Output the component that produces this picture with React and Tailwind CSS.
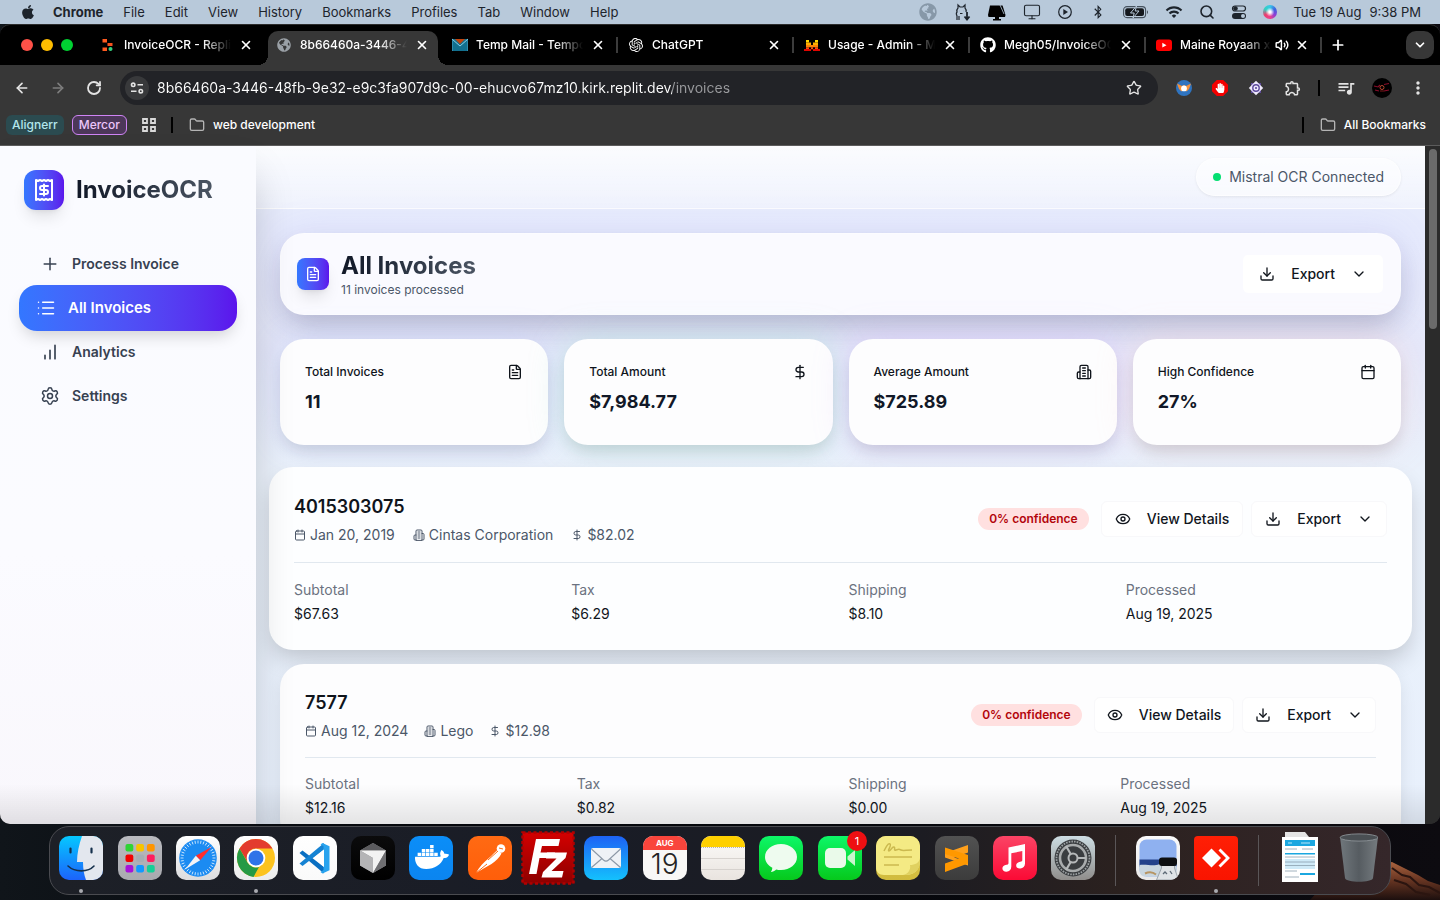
import React from "react";
import {
  Plus,
  List,
  Settings,
  FileText,
  Download,
  ChevronDown,
  DollarSign,
  Calendar,
  Eye,
  X,
  ArrowLeft,
  ArrowRight,
  RotateCw,
  Star,
  Search,
  Monitor,
  Folder,
  Volume2,
} from "lucide-react";
import { FaApple, FaBluetoothB, FaGithub, FaDocker, FaGlobeAmericas, FaHandPaper } from "react-icons/fa";
import { SiOpenai } from "react-icons/si";
import { MdOutlineExtension, MdQueueMusic, MdMoreVert, MdWifi } from "react-icons/md";

/* ---------- shared line icons ---------- */

function Line({ className = "size-4", children, width = 2 }) {
  return (
    <svg
      viewBox="0 0 24 24"
      fill="none"
      stroke="currentColor"
      strokeWidth={width}
      strokeLinecap="round"
      strokeLinejoin="round"
      className={className}
      aria-hidden="true"
    >
      {children}
    </svg>
  );
}

const Building = ({ className }) => (
  <Line className={className}>
    <path d="M6 22V4a2 2 0 0 1 2-2h8a2 2 0 0 1 2 2v18Z" />
    <path d="M6 12H4a2 2 0 0 0-2 2v6a2 2 0 0 0 2 2h2" />
    <path d="M18 9h2a2 2 0 0 1 2 2v9a2 2 0 0 1-2 2h-2" />
    <path d="M10 6h4M10 10h4M10 14h4M10 18h4" />
  </Line>
);

const Bars = ({ className }) => (
  <Line className={className}>
    <path d="M12 20V10M18 20V4M6 20v-4" />
  </Line>
);

const Receipt = ({ className }) => (
  <Line className={className}>
    <path d="M4 2v20l2-1 2 1 2-1 2 1 2-1 2 1 2-1 2 1V2l-2 1-2-1-2 1-2-1-2 1-2-1-2 1Z" />
    <path d="M16 8h-6a2 2 0 1 0 0 4h4a2 2 0 1 1 0 4H8" />
    <path d="M12 17.5v-11" />
  </Line>
);

/* ---------- menu bar ---------- */

const menus = ["File", "Edit", "View", "History", "Bookmarks", "Profiles", "Tab", "Window", "Help"];

function MenuBar() {
  return (
    <header className="flex h-6 shrink-0 items-center bg-[#b8c9da] pr-[19px] pl-5 text-[13px] leading-4 text-[#1d242c]">
      <FaApple className="size-4" aria-label="Apple" />
      <nav className="ml-[17px] flex gap-5" aria-label="Menu bar">
        <button className="font-bold">Chrome</button>
        {menus.map((m) => (
          <button key={m}>{m}</button>
        ))}
      </nav>
      <div className="ml-auto flex items-center gap-4">
        <FaGlobeAmericas className="size-[18px] text-[#8798a8]" />
        <svg viewBox="0 0 18 18" className="size-[18px]" fill="none" stroke="currentColor" strokeWidth="1.2">
          <path d="M4 17v-4c-1-2-1-3 0-4-.5-2 0-3 1-4V2l2 2h3l2-2v3c1 1 1.500 2 1 4M6 8h.1M10.500 8h.1M7 10.500h2.500M6 13v4" />
          <path d="M14 9v7M11.500 13.500 14 16.500l2.500-3" strokeWidth="1.800" />
        </svg>
        <svg viewBox="0 0 20 18" className="h-[18px] w-5 text-black" fill="currentColor">
          <path d="M3 2.500h12.500l1 3 2 6.500-.5 2H1.500L1 12z" />
          <path d="M8 14h4v2h2v1.500H6V16h2z" />
          <path d="m13 2 4 9" stroke="#b8c9da" strokeWidth=".8" />
        </svg>
        <Monitor className="size-[18px]" strokeWidth={1.5} />
        <svg viewBox="0 0 16 16" className="size-4" fill="none" stroke="currentColor" strokeWidth="1.200">
          <circle cx="8" cy="8" r="6.300" />
          <path d="m6.300 5 4.700 3-4.700 3z" fill="currentColor" stroke="none" />
        </svg>
        <FaBluetoothB className="mx-0.5 size-3.5" />
        <svg viewBox="0 0 26 14" className="h-[14px] w-[26px]">
          <rect x=".6" y="1.600" width="22" height="11" rx="3.400" fill="none" stroke="#46525e" strokeWidth="1.100" />
          <rect x="2.200" y="3.200" width="18.800" height="7.800" rx="2" fill="#14181d" />
          <path d="M24 5.200v3.800c1.300-.5 1.300-3.300 0-3.800z" fill="#46525e" />
          <path d="m13.500 1-6 7h3.700L10 13l6-7h-3.800z" fill="#14181d" stroke="#b8c9da" strokeWidth="1" />
        </svg>
        <MdWifi className="size-[18px]" />
        <Search className="size-4" strokeWidth={2.4} />
        <svg viewBox="0 0 16 16" className="size-4" fill="none" stroke="currentColor" strokeWidth="1.200">
          <rect x="1.500" y="2" width="13" height="5" rx="2.500" />
          <circle cx="4.500" cy="4.500" r="1.700" fill="currentColor" />
          <rect x="1" y="9" width="14" height="6" rx="3" fill="currentColor" stroke="none" />
          <circle cx="12" cy="12" r="2" fill="#b8c9da" stroke="none" />
        </svg>
        <span className="size-3.5 rounded-full bg-[radial-gradient(circle_at_50%_50%,#ffffff_10%,transparent_45%),conic-gradient(#37c9e8,#3d63e0,#8b3fd6,#f0408a,#ea3f6e,#35d0c0,#37c9e8)]" />
      </div>
      <time className="ml-4 flex gap-2">
        <span>Tue 19 Aug</span>
        <span>9:38 PM</span>
      </time>
    </header>
  );
}

/* ---------- browser chrome ---------- */

const ReplitIcon = () => (
  <svg viewBox="0 0 16 16" className="size-4">
    <path d="M2.500 2H7v3.500H2.500zM2.500 10.500H7V14H2.500z" fill="#ff5a1f" />
    <path d="M7.500 6h5v3h-5z" fill="#f4511e" />
    <circle cx="10.500" cy="12" r="2" fill="#35d07f" />
  </svg>
);
const MailIcon = () => (
  <svg viewBox="0 0 16 16" className="size-4">
    <path d="M0 2h16v12H0z" fill="#12708f" />
    <path d="M3 2h10L8 7z" fill="#c1440e" />
    <path d="m0 2 8 7 8-7" fill="none" stroke="#8fd0e8" strokeWidth="1" />
    <path d="M0 14V2M16 14V2" stroke="#5fb4d4" strokeWidth=".8" />
  </svg>
);
const MistralIcon = () => (
  <svg viewBox="0 0 16 16" className="size-4">
    <path d="M2 3h3v2.500H2zM11 3h3v2.500h-3z" fill="#ffd800" />
    <path d="M2 5.500h5V8H2zM9 5.500h5V8H9z" fill="#ffaf00" />
    <path d="M2 8h12v2.300H2z" fill="#ff8205" />
    <path d="M2 10.300h3v2H2zM7 10.300h2v2H7zM11 10.300h3v2h-3z" fill="#fa500f" />
    <path d="M0 12h7v2H0zM9 12h7v2H9z" fill="#e10500" />
  </svg>
);
const YouTubeIcon = () => (
  <svg viewBox="0 0 16 16" className="size-4">
    <rect y="2.500" width="16" height="11.500" rx="3" fill="#f00" />
    <path d="m6.300 5.800 4.200 2.400-4.200 2.400z" fill="#fff" />
  </svg>
);

const tabs = [
  { title: "InvoiceOCR - Replit", icon: <ReplitIcon /> },
  { title: "8b66460a-3446-48fb", icon: <FaGlobeAmericas className="size-3.5 text-[#9aa0a6]" />, active: true },
  { title: "Temp Mail - Temporary", icon: <MailIcon /> },
  { title: "ChatGPT", icon: <SiOpenai className="size-3.5" />, sep: true },
  { title: "Usage - Admin - Mistral", icon: <MistralIcon />, sep: true },
  { title: "Megh05/InvoiceOCR", icon: <FaGithub className="size-4" />, sep: true },
  { title: "Maine Royaan x", icon: <YouTubeIcon />, sep: true, audio: true },
];

function Tab({ tab }) {
  return (
    <div className="flex h-10 min-w-0 flex-[0_1_176px] items-end">
      <div
        className={
          tab.active
            ? "relative mr-1.5 flex h-[34px] min-w-0 flex-1 items-center rounded-t-[10px] bg-[#373737] pb-1.5 pl-2 before:absolute before:bottom-0 before:-left-2.5 before:size-2.5 before:bg-[radial-gradient(circle_at_0_0,transparent_10px,#373737_10px)] after:absolute after:-right-2.5 after:bottom-0 after:size-2.5 after:bg-[radial-gradient(circle_at_100%_0,transparent_10px,#373737_10px)]"
            : "relative mr-1.5 flex h-[34px] min-w-0 flex-1 items-center pb-1.5 pl-2"
        }
      >
        {tab.sep && <span className="absolute top-1.5 -left-1 h-4 w-0.5 bg-[#3c3c3c]" />}
        <button role="tab" aria-selected={!!tab.active} className="flex min-w-0 flex-1 items-center gap-2 text-left">
          <span className="flex w-4 shrink-0 justify-center">{tab.icon}</span>
          <span className="min-w-0 flex-1 overflow-hidden whitespace-nowrap [mask-image:linear-gradient(90deg,#000_calc(100%-28px),transparent)]">
            {tab.title}
          </span>
        </button>
        {tab.audio && <Volume2 className="-mr-0.5 ml-1 size-3.5 shrink-0" strokeWidth={2.5} aria-label="Playing audio" />}
        <button aria-label={"Close " + tab.title} className="mr-[9px] ml-2 flex w-3.5 shrink-0 justify-center">
          <X className="size-3.5" strokeWidth={2.8} />
        </button>
      </div>
    </div>
  );
}

function TabStrip() {
  return (
    <div className="flex h-10 shrink-0 items-center bg-black pr-1.5 pl-[21px] text-xs font-medium text-white">
      <div className="flex w-[71px] shrink-0 gap-2">
        <button aria-label="Close window" className="size-3 rounded-full bg-[#ff5148]" />
        <button aria-label="Minimize window" className="size-3 rounded-full bg-[#ffbd00]" />
        <button aria-label="Zoom window" className="size-3 rounded-full bg-[#00d232]" />
      </div>
      <div className="flex min-w-0 flex-1" role="tablist">
        {tabs.map((t) => (
          <Tab key={t.title} tab={t} />
        ))}
        <div className="flex items-center gap-2">
          <span className="-ml-1 h-4 w-0.5 bg-[#3c3c3c]" />
          <button aria-label="New tab">
            <Plus className="size-4" strokeWidth={2.6} />
          </button>
        </div>
      </div>
      <button aria-label="Search tabs" className="flex size-7 items-center justify-center rounded-[10px] bg-[#373737]">
        <ChevronDown className="size-3.5" strokeWidth={3} />
      </button>
    </div>
  );
}

function Toolbar() {
  return (
    <div className="flex h-[46px] shrink-0 items-center bg-[#373737] pr-4 pl-3.5 text-[#e3e3e3]">
      <div className="flex w-[106px] gap-5">
        <button aria-label="Back">
          <ArrowLeft className="size-4" strokeWidth={2.5} />
        </button>
        <button aria-label="Forward" className="text-[#7d7d7d]">
          <ArrowRight className="size-4" strokeWidth={2.5} />
        </button>
        <button aria-label="Reload">
          <RotateCw className="size-4" strokeWidth={2.7} />
        </button>
      </div>
      <div className="flex h-[34px] flex-1 items-center rounded-full bg-[#222327] pr-4 pl-[5px]">
        <button aria-label="Site information" className="flex size-6 items-center justify-center rounded-full bg-[#38393b]">
          <svg viewBox="0 0 14 14" className="size-3.5" fill="none" stroke="currentColor" strokeWidth="1.600">
            <circle cx="3.200" cy="3.800" r="1.700" />
            <path d="M7.500 3.800H13M1 10.200h5.500" />
            <circle cx="10.800" cy="10.200" r="1.700" />
          </svg>
        </button>
        <input
          aria-label="Address"
          readOnly
          className="ml-2 min-w-0 flex-1 bg-[linear-gradient(90deg,#ffffff_515px,#9a9b9e_515px)] bg-clip-text text-sm text-transparent outline-none"
          defaultValue="8b66460a-3446-48fb-9e32-e9c3fa907d9c-00-ehucvo67mz10.kirk.replit.dev/invoices"
        />
        <button aria-label="Bookmark this tab">
          <Star className="size-4" strokeWidth={2} />
        </button>
      </div>
      <div className="ml-[18px] flex items-center gap-5">
        <button aria-label="Extension">
          <svg viewBox="0 0 16 16" className="size-4">
            <circle cx="8" cy="8" r="8" fill="#2f74c0" />
            <path d="M1 3.500 6 6l2-1 2 1 5-2.500-2 5.500-3 3H6L3 9z" fill="#f5913a" />
            <path d="M4.500 12 8 10l3.500 2L8 15z" fill="#2f74c0" />
            <circle cx="8" cy="8.400" r="2.900" fill="#fff" />
          </svg>
        </button>
        <button aria-label="Ad blocker" className="flex size-4 items-center justify-center bg-[#f40000] [clip-path:polygon(30%_0,70%_0,100%_30%,100%_70%,70%_100%,30%_100%,0_70%,0_30%)]">
          <FaHandPaper className="size-2.5 text-white" />
        </button>
        <button aria-label="Extension">
          <svg viewBox="0 0 16 16" className="size-4">
            <path d="M3 3h10v10H3z" fill="#5d4a9c" />
            <path d="M8 .8 15.200 8 8 15.200.8 8z" fill="#efeafc" />
            <circle cx="8" cy="8" r="3.200" fill="none" stroke="#5d4a9c" strokeWidth="1.400" />
            <circle cx="8" cy="8" r="1.100" fill="#5d4a9c" />
          </svg>
        </button>
        <button aria-label="Extensions">
          <MdOutlineExtension className="size-[18px]" />
        </button>
        <span className="-mx-1 h-4 w-0.5 bg-black" />
        <button aria-label="Media controls">
          <MdQueueMusic className="size-5" />
        </button>
        <button aria-label="Profile" className="-mx-1 flex size-5 items-center justify-center rounded-full bg-black">
          <svg viewBox="0 0 20 20" className="size-5" fill="none">
            <path d="M2 8l4 1 2-2M12 6.500l5-1M3 12l4 1M12 13l5-1" stroke="#8a0d2a" strokeWidth="1.100" />
            <circle cx="10" cy="9.500" r="2" stroke="#b6452f" strokeWidth="1" />
            <path d="M8 13h4" stroke="#7a1818" strokeWidth="1.200" />
          </svg>
        </button>
        <button aria-label="Chrome menu" className="-mr-1">
          <MdMoreVert className="size-5" />
        </button>
      </div>
    </div>
  );
}

function BookmarksBar() {
  return (
    <div className="flex h-[35px] shrink-0 items-center border-b border-[#5c5c5c] bg-[#373737] pr-3.5 pb-1.5 pl-1.5 text-xs font-medium text-white">
      <button className="h-5 rounded-md bg-[#2b4b50] px-1.5 text-[#b2e6ec]">Alignerr</button>
      <button className="ml-2 h-5 rounded-md border border-[#cf84f5] bg-[#4c3759] px-1.5 text-[#ecc6fb]">Mercor</button>
      <button aria-label="Apps" className="ml-[15px]">
        <svg viewBox="0 0 14 14" className="size-3.5" fill="none" stroke="#d9d9d9" strokeWidth="1.800">
          <path d="M1 1h4v4H1zM9 1h4v4H9zM1 9h4v4H1zM9 9h4v4H9z" />
        </svg>
      </button>
      <span className="ml-[15px] h-4 w-0.5 bg-black" />
      <a href="#web-development" className="ml-4 flex items-center gap-2">
        <Folder className="size-4 text-[#b4b4b4]" strokeWidth={2} /> web development
      </a>
      <span className="ml-auto h-4 w-0.5 bg-black" />
      <a href="#all-bookmarks" className="ml-4 flex items-center gap-2">
        <Folder className="size-4 text-[#b4b4b4]" strokeWidth={2} /> All Bookmarks
      </a>
    </div>
  );
}

/* ---------- InvoiceOCR page ---------- */

const navItems = [
  { label: "Process Invoice", icon: Plus },
  { label: "All Invoices", icon: List, active: true },
  { label: "Analytics", icon: Bars },
  { label: "Settings", icon: Settings },
];

function Sidebar() {
  return (
    <aside className="relative w-64 shrink-0 bg-[linear-gradient(180deg,#fafbff,#fbfbff_60%,#f9f7fc)] px-6 pt-6 shadow-[0_25px_40px_-6px_rgba(0,0,0,0.22)]">
      <div className="flex items-center gap-3">
        <span className="flex size-10 items-center justify-center rounded-xl bg-linear-to-r from-[#3377ff] to-[#5b13ec] text-white shadow-lg">
          <Receipt className="size-6" />
        </span>
        <span className="bg-linear-to-r from-[#111827] to-[#4b5563] bg-clip-text text-2xl font-bold text-transparent">
          InvoiceOCR
        </span>
      </div>
      <nav className="mt-8" aria-label="Main">
        {navItems.map(({ label, icon: Icon, active }) => (
          <a
            key={label}
            href={"#" + label}
            className={
              active
                ? "-mx-[5px] -my-px flex h-[46px] items-center gap-3 rounded-[18px] bg-linear-to-r from-[#3377ff] to-[#5b13ec] px-[17px] text-[15px] font-semibold text-white shadow-[0_8px_16px_-4px_rgba(0,0,0,0.18)]"
                : "flex h-11 items-center gap-3 px-4 text-sm font-semibold text-[#374151]"
            }
          >
            <Icon className="size-5" strokeWidth={1.8} />
            {label}
          </a>
        ))}
      </nav>
    </aside>
  );
}

function ExportButton({ className }) {
  return (
    <button className={className}>
      <Download className="size-4" />
      Export
      <ChevronDown className="size-4" />
    </button>
  );
}

const stats = [
  {
    label: "Total Invoices",
    value: "11",
    icon: FileText,
    glow: "shadow-[0_10px_16px_-4px_rgba(20,20,40,0.14),0_0_34px_rgba(150,170,245,0.2)]",
  },
  {
    label: "Total Amount",
    value: "$7,984.77",
    icon: DollarSign,
    glow: "shadow-[0_10px_16px_-4px_rgba(20,40,40,0.14),0_0_34px_rgba(150,225,200,0.35)]",
  },
  {
    label: "Average Amount",
    value: "$725.89",
    icon: Building,
    glow: "shadow-[0_10px_16px_-4px_rgba(20,20,40,0.14),0_0_34px_rgba(205,165,245,0.35)]",
  },
  {
    label: "High Confidence",
    value: "27%",
    icon: Calendar,
    glow: "shadow-[0_10px_16px_-4px_rgba(30,20,30,0.14),0_0_34px_rgba(245,195,195,0.35)]",
  },
];

const invoices = [
  {
    id: "4015303075",
    date: "Jan 20, 2019",
    vendor: "Cintas Corporation",
    total: "$82.02",
    fields: [["Subtotal", "$67.63"], ["Tax", "$6.29"], ["Shipping", "$8.10"], ["Processed", "Aug 19, 2025"]],
    raised: true,
  },
  {
    id: "7577",
    date: "Aug 12, 2024",
    vendor: "Lego",
    total: "$12.98",
    fields: [["Subtotal", "$12.16"], ["Tax", "$0.82"], ["Shipping", "$0.00"], ["Processed", "Aug 19, 2025"]],
  },
];

function InvoiceCard({ invoice }) {
  const { raised } = invoice;
  const button = raised
    ? "flex h-9 items-center gap-4 rounded-md border border-[#f8f8fa] bg-white px-[13px]"
    : "flex h-9 items-center gap-4 rounded-md border border-[#f8f8fa] bg-white px-3";
  return (
    <article
      className={
        raised
          ? "-mx-[11px] -my-0.5 rounded-3xl bg-[#fdfeff] px-[25px] py-[26px] shadow-[0_12px_24px_-4px_rgba(0,0,0,0.2)]"
          : "rounded-3xl bg-[#fdfdfe] p-[25px] shadow-[0_6px_18px_-2px_rgba(0,0,0,0.1)]"
      }
    >
      <div className="flex items-center justify-between">
        <div>
          <h3 className="text-lg leading-7 font-semibold text-[#0f141b]">{invoice.id}</h3>
          <p className={raised ? "mt-1 flex gap-[18px] text-sm text-[#4b5768]" : "mt-1 flex gap-4 text-sm text-[#4b5768]"}>
            <span className="flex items-center gap-1">
              <Calendar className="size-3" /> {invoice.date}
            </span>
            <span className="flex items-center gap-1">
              <Building className="size-3" /> {invoice.vendor}
            </span>
            <span className="flex items-center gap-1">
              <DollarSign className="size-3" /> {invoice.total}
            </span>
          </p>
        </div>
        <div className="flex items-center text-sm font-medium text-[#11161d]">
          <span className="mr-3 rounded-full bg-[#ffe0e0] px-[11px] py-[3px] text-xs font-semibold text-[#b3060c]">
            0% confidence
          </span>
          <button className={button}>
            <Eye className="size-4" />
            View Details
          </button>
          <ExportButton className={button + " ml-2"} />
        </div>
      </div>
      <dl
        className={
          raised
            ? "mt-[17px] grid grid-cols-4 gap-4 border-t border-[#e1e8ef] pt-[17px] text-sm"
            : "mt-4 grid grid-cols-4 gap-4 border-t border-[#e1e8ef] pt-4 text-sm"
        }
      >
        {invoice.fields.map(([k, v]) => (
          <div key={k}>
            <dt className="text-[#6b7280]">{k}</dt>
            <dd className="mt-1 text-[#11161d]">{v}</dd>
          </div>
        ))}
      </dl>
    </article>
  );
}

function InvoicesPage() {
  return (
    <main className="min-w-0 flex-1 overflow-hidden bg-[#eaf0fc] bg-[linear-gradient(180deg,#eaf0fc,#e6eafc_12%,#e5e8fa_30%,#eaf1fb_48%,#e8f0fc)]">
      <div className="flex justify-end border-b border-white/40 bg-linear-to-b from-white/80 to-white/35 px-6 py-3">
        <span className="flex h-[38px] items-center gap-2 rounded-full border border-white/60 bg-white/50 px-4 text-sm text-[#4b5768] shadow-[0_1px_3px_rgba(0,0,0,0.07)]">
          <span className="size-2 rounded-full bg-[#05df72]" />
          Mistral OCR Connected
        </span>
      </div>
      <div className="flex flex-col gap-6 p-6">
        <section className="flex items-center justify-between rounded-3xl border border-white/40 bg-[#fafaff] p-4 shadow-[0_14px_28px_-4px_rgba(20,20,50,0.22),0_0_40px_rgba(150,150,255,0.12)]">
          <div className="flex items-center gap-3">
            <span className="flex size-8 items-center justify-center rounded-lg bg-linear-to-r from-[#3377ff] to-[#5b13ec] text-white shadow-lg">
              <FileText className="size-4" />
            </span>
            <div>
              <h1 className="w-fit bg-linear-to-r from-[#111827] to-[#4b5563] bg-clip-text text-2xl leading-8 font-bold text-transparent">
                All Invoices
              </h1>
              <p className="text-xs leading-4 text-[#4b5768]">11 invoices processed</p>
            </div>
          </div>
          <ExportButton className="flex h-10 items-center gap-4 rounded-md border border-[#fafaff] bg-white px-4 text-sm font-medium text-[#11161d]" />
        </section>
        <section className="grid grid-cols-4 gap-4" aria-label="Summary">
          {stats.map(({ label, value, icon: Icon, glow }) => (
            <div key={label} className={"rounded-3xl bg-[#fdfdfe] px-[25px] pt-[25px] pb-[29px] text-[#0f141b] " + glow}>
              <div className="flex items-center justify-between">
                <h2 className="text-xs leading-4 font-medium">{label}</h2>
                <Icon className="size-4" />
              </div>
              <p className="mt-2 text-lg leading-7 font-bold text-[#111827]">{value}</p>
            </div>
          ))}
        </section>
        <section className="flex flex-col gap-4" aria-label="Invoices">
          {invoices.map((inv) => (
            <InvoiceCard key={inv.id} invoice={inv} />
          ))}
        </section>
      </div>
    </main>
  );
}

/* ---------- dock ---------- */

function Tile({ children, id, from, to, rx = 10 }) {
  return (
    <svg viewBox="0 0 44 44" className="size-11" aria-hidden="true">
      <defs>
        <linearGradient id={id} x1="0" x2="0" y1="0" y2="1">
          <stop stopColor={from} />
          <stop offset="1" stopColor={to} />
        </linearGradient>
        <clipPath id={id + "-clip"}>
          <rect width="44" height="44" rx={rx} />
        </clipPath>
      </defs>
      <g clipPath={"url(#" + id + "-clip)"}>
        <rect width="44" height="44" fill={"url(#" + id + ")"} />
        {children}
      </g>
    </svg>
  );
}

const padColors = ["#2fd435", "#f7c400", "#ff9500", "#f30000", "#a5adb3", "#ff1d5e", "#a812d8", "#1199ff", "#14cf97"];

const ticks = Array.from({ length: 36 }, (_, i) => i * 10);

const Finder = () => (
  <Tile id="finder" from="#05c8ff" to="#1c63fb">
    <path d="M23 0c-3 9-5 17-5 26h6c0 7 1 13 3 18h17V0z" fill="#e3e7ee" />
    <path d="M11.500 12.500v4M32.500 12.500v4" stroke="#14304c" strokeWidth="2.200" strokeLinecap="round" />
    <path d="M9 30c7 6.500 20 6.500 26 0" fill="none" stroke="#14304c" strokeWidth="1.600" strokeLinecap="round" />
  </Tile>
);
const Launchpad = () => (
  <Tile id="launchpad" from="#b9babf" to="#a9aaaf">
    {padColors.map((c, i) => (
      <rect key={c} x={7.500 + (i % 3) * 10.700} y={8 + Math.floor(i / 3) * 10.500} width="7.800" height="7.400" rx="2" fill={c} />
    ))}
  </Tile>
);
const Safari = () => (
  <Tile id="safari" from="#ffffff" to="#dcdcde">
    <circle cx="22" cy="22" r="18.800" fill="#1b8bf2" />
    {ticks.map((a) => (
      <path key={a} d="M22 4.500v3" stroke="#e6f4ff" strokeWidth=".8" transform={"rotate(" + a + " 22 22)"} />
    ))}
    <path d="M35.500 11 24.200 24.200 19.800 19.800z" fill="#ff2d2d" />
    <path d="M9 33.500 19.800 19.800l4.400 4.400z" fill="#f4f4f6" />
  </Tile>
);
const Chrome = () => (
  <Tile id="chrome" from="#ffffff" to="#ececec">
    <circle cx="22" cy="22" r="19" fill="#fcc31e" />
    <path d="M5.500 12.500A19 19 0 0 1 38.500 12.500H22a9.500 9.500 0 0 0-8.500 5.500l-.500 7z" fill="#e33b2e" />
    <path d="M5.500 12.500 13.700 26.700A9.500 9.500 0 0 0 25 31l-5.500 9.900A19 19 0 0 1 5.500 12.500z" fill="#269a45" />
    <circle cx="22" cy="22" r="9.300" fill="#fff" />
    <circle cx="22" cy="22" r="7.500" fill="#2f73e8" />
  </Tile>
);
const Code = () => (
  <Tile id="code" from="#ffffff" to="#fafafa">
    <path d="m6.500 17 3-2.500L31 31v6.500z" fill="#0a6fc2" />
    <path d="m6.500 27.500 3 2.500L31 13.500V7z" fill="#1583d3" />
    <path d="m29.500 7 7 3.200v24.100l-7 3.200-2-1.500 3-2V10l-3-1.500z" fill="#29a3ee" />
    <path d="M31 13.500 20.500 22 31 31z" fill="#fff" />
  </Tile>
);
const Cursor = () => (
  <Tile id="cursor" from="#0b0b0c" to="#000000">
    <path d="m22 7 13 7.500v15L22 37 9 29.500v-15z" fill="#8b8b8d" />
    <path d="M9 14.500 22 7l13 7.500z" fill="#5b5b5e" />
    <path d="M9 14.500h26L22 37V22z" fill="#f2f2f2" />
    <path d="M9 14.500 22 22v15L9 29.500z" fill="#b4b4b6" />
    <path d="M35 14.500 22 37l13-7.500z" fill="#6f6f72" />
  </Tile>
);
const Docker = () => (
  <Tile id="docker" from="#0b8ef8" to="#0b85f0">
    <FaDocker x="6" y="4" size="34" color="#fff" />
  </Tile>
);
const Postman = () => (
  <Tile id="postman" from="#ff6a13" to="#ff5e0a">
    <path d="M8 37c3-6 8-11 13-15 3-2.500 6-6 8.500-8l4 3.500c-2 4-6 8-10 10.500C18 31 13 34 8 37z" fill="#fff" />
    <circle cx="33" cy="12.500" r="4.300" fill="#fff" />
    <path d="m20 24 10-9M8 37l11-9M31 12l4 1" stroke="#ff6a13" strokeWidth="1" />
  </Tile>
);
const FileZilla = () => (
  <svg viewBox="0 0 54 54" className="size-[54px]" aria-hidden="true">
    <defs>
      <linearGradient id="fz" x1="0" x2="0" y1="0" y2="1">
        <stop stopColor="#d40000" />
        <stop offset="1" stopColor="#8d0000" />
      </linearGradient>
    </defs>
    <rect x="1.500" y="1.500" width="51" height="51" fill="url(#fz)" stroke="#b30000" strokeWidth="2.500" strokeDasharray="3 2.500" />
    <path d="M15 8h24l-1.500 7H21l-1.500 6.500H34L33 27H18.500L15.500 43H8z" fill="#fff" />
    <path d="M26 21.500h20L44.500 27 30.500 40h12L41 46.500H20.500L22 41l13.500-13.500H25z" fill="#fff" />
  </svg>
);
const Mail = () => (
  <Tile id="mail" from="#1d62f5" to="#14c1fd">
    <rect x="7" y="12" width="30" height="20" rx="2" fill="#eef2f6" />
    <path d="m7.500 13 12 11c1.500 1.300 3.500 1.300 5 0l12-11M7.500 31.500 18 22.500M36.500 31.500 26 22.500" fill="none" stroke="#8b98a6" strokeWidth="1.100" />
  </Tile>
);
const CalendarApp = () => (
  <div className="flex size-11 flex-col overflow-hidden rounded-[10px] bg-[#f8f7f6] text-center">
    <span className="bg-[#f9453c] text-[8px] leading-[14px] font-bold text-white">AUG</span>
    <span className="text-[28px] leading-[28px] font-light text-[#242424]">19</span>
  </div>
);
const Notes = () => (
  <Tile id="notes" from="#fcfbfa" to="#e9e4df">
    <path d="M0 0h44v11H0z" fill="#ffd000" />
    <path d="M0 11.500h44" stroke="#a7a29d" strokeWidth=".8" strokeDasharray="1 1" />
    <path d="M0 22.500h44M0 33.500h44" stroke="#cfcbc8" strokeWidth=".8" />
  </Tile>
);
const Messages = () => (
  <Tile id="messages" from="#0df768" to="#06c91c">
    <path d="M22 8c9 0 16 5.600 16 13s-7 13-16 13c-1.700 0-3.300-.2-4.800-.6-1.500 1.400-3.400 2.400-5.400 2.600 1-1.200 1.500-2.800 1.500-4.200C9 29.500 6 25.500 6 21c0-7.400 7-13 16-13z" fill="#eefbef" />
  </Tile>
);
const FaceTime = () => (
  <Tile id="facetime" from="#0df768" to="#06c91c">
    <rect x="7" y="12" width="21" height="20" rx="5" fill="#eafaea" />
    <path d="M29.500 20.500 37 14v16l-7.500-6.500z" fill="#c9f5ce" />
  </Tile>
);
const Stickies = () => (
  <Tile id="stickies" from="#d9c653" to="#d1bb3d">
    <path d="M0 0h44v26c-1 8-6 13-14 13H8c-5 0-8-3-8-8z" fill="#f4ea84" />
    <path d="M44 22c-1 5-5 7-10 7 1 5-2 9-7 10 10 1 17-5 17-13z" fill="#e0d160" />
    <path d="M8 15c2-4 4-8 6-7s-3 7-1 7 3-5 5-4-1 4 2 3 3-1 5 0 5 0 11 0M8 21h28M8 29h15" fill="none" stroke="#cbb94f" strokeWidth="1.500" />
  </Tile>
);
const Sublime = () => (
  <Tile id="sublime" from="#525252" to="#3c3c3c">
    <path d="m10 17 23-8v7.500l-14 5 14 4.500v3.500l-23-8z" fill="#ffa01c" />
    <path d="m33 19-23-7.500V18l14 4.500-14 5V36l23-8.500V21z" fill="#ff9800" />
  </Tile>
);
const Music = () => (
  <Tile id="music" from="#fb4465" to="#fb0a35">
    <path d="M15.500 11.500 32 8v19.500c0 3-2 4.800-4.700 5-2.400.2-4.100-1-4.100-3 0-2.300 1.800-3.400 4-3.800 1.500-.3 2.100-.6 2.100-1.800V15l-11 2.300v13.200c0 3.200-2 5.100-4.800 5.300-2.400.1-4.100-1.200-4.100-3.200 0-2.200 1.700-3.400 3.900-3.800 1.500-.2 2.200-.6 2.200-1.900z" fill="#fff" />
  </Tile>
);
const SystemSettings = () => (
  <Tile id="syssettings" from="#cddde3" to="#8f8d8b">
    <circle cx="22" cy="22" r="18.500" fill="#3a3d40" />
    <circle cx="22" cy="22" r="16.500" fill="none" stroke="#9ba0a2" strokeWidth="1.800" strokeDasharray="1.600 1.100" />
    <circle cx="22" cy="22" r="13" fill="none" stroke="#a8abac" strokeWidth="2.600" />
    <circle cx="22" cy="22" r="4.500" fill="none" stroke="#b5b8b9" strokeWidth="2" />
    <path d="M26 22h9M20 18.500 15 10M20 25.500 15 34" stroke="#b5b8b9" strokeWidth="2.200" />
  </Tile>
);
const Preview = () => (
  <Tile id="preview" from="#fafafa" to="#e9e9e9">
    <rect x="3.500" y="3.500" width="37" height="37" rx="7" fill="#8fb1f0" />
    <path d="M3.500 23.500h37v7h-37z" fill="#24428a" />
    <path d="M3.500 29c8-1 14 2 20-1l17 2v4c0 4-2 6.500-6 6.500H9.500c-4 0-6-2.500-6-6.500z" fill="#c9d6df" />
    <path d="M9 37.500c4-2 8-1.500 11 1" stroke="#b79563" strokeWidth="2" fill="none" />
    <path d="M25.500 28h13v4l4 12h-22l5-12z" fill="#dfe3e6" stroke="#8e979e" strokeWidth=".8" />
    <rect x="23" y="21.500" width="18" height="8.500" rx="3" fill="#0d0f11" />
    <path d="m27 38 2-2 2 2M34 35l2 3" stroke="#5e6a76" strokeWidth="1.300" fill="none" />
  </Tile>
);
const AnyDesk = () => (
  <Tile id="anydesk" from="#ff1f05" to="#f91400" rx={4}>
    <path d="m17.500 12.500 9.500 9.500-9.500 9.500L8 22z" fill="#fff" />
    <path d="m24.500 14.500 2-2L36 22l-9.500 9.500-2-2L32 22z" fill="#fff" />
  </Tile>
);
const Documents = () => (
  <svg viewBox="0 0 44 54" className="h-[54px] w-11" aria-hidden="true">
    <path d="M7 1h20l4 5v4H7z" fill="#e4e4e4" />
    <path d="M4 6h36v45H4z" fill="#fff" />
    <path d="M7 9h30v6H7zM7 22h30v1.500H7zM22 42h15v2H22z" fill="#1ba7e0" />
    <path d="M7 28h30v10H7z" fill="#cfeaf8" />
    <path d="M7 18h12M24 18h11M7 26h30M7 31h30M7 34.500h30M7 40h12M7 46h14" stroke="#8ba0ad" strokeWidth=".8" />
    <path d="M10 12h4M23 12h9" stroke="#b7e6fa" strokeWidth="1" />
  </svg>
);
const Trash = () => (
  <svg viewBox="0 0 44 50" className="h-[50px] w-11" aria-hidden="true">
    <defs>
      <linearGradient id="trash" x1="0" x2="1" y1="0" y2="0">
        <stop stopColor="#70777c" />
        <stop offset=".5" stopColor="#565c61" />
        <stop offset="1" stopColor="#757b7f" />
      </linearGradient>
    </defs>
    <path d="M3 4h38l-5 41c-1 5-27 5-28 0z" fill="url(#trash)" />
    <ellipse cx="22" cy="4.500" rx="19" ry="3.600" fill="#4a4f53" stroke="#8b9296" strokeWidth=".9" />
  </svg>
);

const dockApps = [
  { name: "Finder", Icon: Finder, running: true },
  { name: "Launchpad", Icon: Launchpad },
  { name: "Safari", Icon: Safari },
  { name: "Google Chrome", Icon: Chrome, running: true },
  { name: "Visual Studio Code", Icon: Code },
  { name: "Cursor", Icon: Cursor },
  { name: "Docker", Icon: Docker },
  { name: "Postman", Icon: Postman },
  { name: "FileZilla", Icon: FileZilla },
  { name: "Mail", Icon: Mail },
  { name: "Calendar", Icon: CalendarApp },
  { name: "Notes", Icon: Notes },
  { name: "Messages", Icon: Messages },
  { name: "FaceTime", Icon: FaceTime, badge: "1" },
  { name: "Stickies", Icon: Stickies },
  { name: "Sublime Text", Icon: Sublime },
  { name: "Music", Icon: Music },
  { name: "System Settings", Icon: SystemSettings },
  null,
  { name: "Preview", Icon: Preview },
  { name: "AnyDesk", Icon: AnyDesk, running: true },
  null,
  { name: "Documents", Icon: Documents },
  { name: "Trash", Icon: Trash },
];

/* Rocky ridge of the desktop wallpaper, behind the dock's right end */
const Ridge = () => (
  <svg viewBox="0 0 240 76" className="absolute right-0 bottom-0 h-[76px] w-60" aria-hidden="true">
    <defs>
      <linearGradient id="ridge" x1="0" x2="0" y1="0" y2="1">
        <stop stopColor="#a9633f" />
        <stop offset=".45" stopColor="#6b3723" />
        <stop offset="1" stopColor="#1c0f0e" />
      </linearGradient>
    </defs>
    <path d="M110 76l20-22 40-12 22-4 14 7 12 6 10 6 12 4v15z" fill="url(#ridge)" />
    <path d="M192 44l10 7 8 2 9 8 10 2 11 6M194 56l12 4 10 8 14 3" stroke="#2b1510" strokeWidth="2" fill="none" />
  </svg>
);

function Dock() {
  return (
    <div className="relative shrink-0 pt-0.5 pb-[5px]">
      <Ridge />
      <nav
        aria-label="Dock"
        className="relative mx-[49px] flex h-[69px] rounded-[20px] border border-[#4a4b50] bg-[linear-gradient(90deg,#1d2027,#191c26_40%,#1c1c22_65%,#2b211f_80%,#35272a)] px-0.5"
      >
        {dockApps.map((app, i) =>
          app ? (
            <button key={app.name} aria-label={app.name} className="relative flex min-w-0 flex-1 items-center justify-center pb-[5px]">
              <app.Icon />
              {app.badge && (
                <span className="absolute top-1 right-0.5 flex size-5 items-center justify-center rounded-full bg-[#ee0f12] text-[11px] text-white">
                  {app.badge}
                </span>
              )}
              {app.running && <span className="absolute bottom-px size-1 rounded-full bg-[#a9abb0]" />}
            </button>
          ) : (
            <span key={i} className="my-2 flex w-[26px] shrink-0 justify-center">
              <span className="w-px bg-[#5a5658]" />
            </span>
          )
        )}
      </nav>
    </div>
  );
}

export default function App() {
  return (
    <div className="flex h-screen flex-col overflow-hidden bg-[linear-gradient(90deg,#10151a,#05070c_30%,#07080d_80%,#0d0b10)] font-['Inter',sans-serif]">
      <MenuBar />
      <div className="flex min-h-0 flex-1 flex-col overflow-hidden rounded-[10px] border-t border-[#2c2c2c] bg-[#373737]">
        <TabStrip />
        <Toolbar />
        <BookmarksBar />
        <div className="relative flex min-h-0 flex-1">
          <Sidebar />
          <InvoicesPage />
          <div className="w-[15px] shrink-0 bg-[#2b2b2b] px-1 pt-[3px]">
            <div className="h-[180px] w-2 rounded-full bg-[#6b6b6b]" />
          </div>
          <div className="pointer-events-none absolute right-[15px] bottom-0 left-0 h-10 bg-linear-to-b from-transparent to-black/10" />
        </div>
      </div>
      <Dock />
    </div>
  );
}
